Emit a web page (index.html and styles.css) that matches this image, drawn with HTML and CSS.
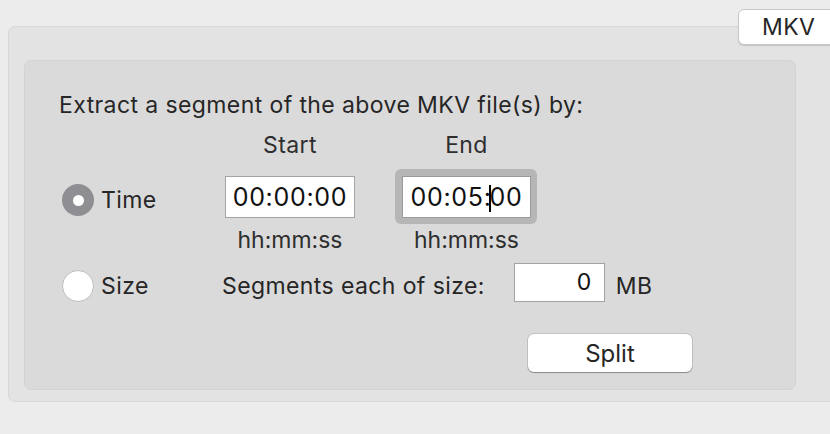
FILE: index.html
```html
<!DOCTYPE html>
<html lang="en">
<head>
    <meta charset="UTF-8">
    <title>MKV Split</title>
    <link rel="stylesheet" href="styles.css">
</head>
<body>
    <div class="tab-button">MKV</div>
    <div class="tabview">
        <div class="panel">
            <p class="intro">Extract a segment of the above MKV file(s) by:</p>

            <div class="time-grid">
                <span></span>
                <span class="col-head">Start</span>
                <span></span>
                <span class="col-head">End</span>

                <label class="choice">
                    <span class="radio checked"></span>
                    <span>Time</span>
                </label>
                <div class="field time">00:00:00</div>
                <span></span>
                <div class="focus-ring">
                    <div class="field time">00:05:<span class="caret"></span>00</div>
                </div>

                <span></span>
                <span class="hint">hh:mm:ss</span>
                <span></span>
                <span class="hint">hh:mm:ss</span>
            </div>

            <div class="size-row">
                <label class="choice">
                    <span class="radio"></span>
                    <span>Size</span>
                </label>
                <span class="size-label">Segments each of size:</span>
                <div class="field number">0</div>
                <span class="unit">MB</span>
            </div>

            <div class="actions">
                <button class="push">Split</button>
            </div>
        </div>
    </div>
</body>
</html>
```

FILE: styles.css
```css
body {
    margin: 0;
    background-color: #ececec;
    font-family: Inter, "Noto Sans", sans-serif;
    font-size: 23px;
    letter-spacing: 0.4px;
    color: #262626;
    overflow: hidden;
}
.tabview {
    margin: 26px -20px 0 8px;
    height: 376px;
    box-sizing: border-box;
    background: #e3e3e3;
    border: 1px solid #d6d6d6;
    border-radius: 7px;
    padding: 33px 0 0 15px;
}
.tab-button {
    position: absolute;
    top: 9px;
    left: 738px;
    width: 110px;
    height: 36px;
    box-sizing: border-box;
    background: #fff;
    border: 1px solid #c9c9c9;
    border-radius: 6px;
    box-shadow: 0 1px 1px rgba(0, 0, 0, 0.15);
    padding-left: 23px;
    line-height: 34px;
}
.panel {
    width: 772px;
    height: 330px;
    box-sizing: border-box;
    background: #dadada;
    border: 1px solid #d3d3d3;
    border-radius: 7px;
    padding: 29px 0 0 34px;
}
.intro {
    margin: 0;
    height: 30px;
    line-height: 30px;
}
.time-grid {
    display: grid;
    grid-template-columns: 166px 130px 47px 129px;
    grid-template-rows: 26px 60px 34px;
    margin-top: 12px;
}
.time-grid > :nth-child(n+5) {
    margin-top: 18px;
}
.time-grid > :nth-child(n+9) {
    margin-top: 10px;
}
.col-head, .hint {
    text-align: center;
    line-height: 26px;
    color: #2e2e2e;
}
.hint {
    line-height: 24px;
    letter-spacing: 0;
}
.choice {
    display: flex;
    align-items: center;
    gap: 7px;
    margin-left: 3px;
}
.time-grid .choice {
    padding-top: 3px;
    height: 42px;
}
.radio {
    width: 32px;
    height: 32px;
    box-sizing: border-box;
    border-radius: 50%;
    background: #fff;
    border: 1px solid #bdbdbd;
    flex: none;
}
.radio.checked {
    background: #8f8f93;
    border: none;
    display: flex;
    align-items: center;
    justify-content: center;
}
.radio.checked::after {
    content: "";
    width: 11px;
    height: 11px;
    border-radius: 50%;
    background: #fff;
}
.field {
    background: #fff;
    border: 1px solid #a3a3a3;
    box-sizing: border-box;
    color: #111;
}
.field.time {
    height: 42px;
    line-height: 40px;
    text-align: center;
    font-size: 25px;
    letter-spacing: 0.7px;
}
.time-grid > .focus-ring {
    margin: 11px -6px -6px -7px;
    padding: 7px 6px 6px 7px;
    background: #b6b6b6;
    border-radius: 6px;
    height: 42px;
}
.focus-ring .field {
    border-color: #9a9a9a;
}
.caret {
    display: inline-block;
    width: 2px;
    height: 27px;
    background: #000;
    vertical-align: -6px;
    margin: 0 -1px 0 -3px;
}
.size-row {
    display: flex;
    align-items: center;
    margin-top: 11px;
    height: 39px;
}
.size-row .choice {
    width: 160px;
    margin-top: 7px;
}
.size-label {
    margin-top: 7px;
}
.field.number {
    width: 91px;
    height: 39px;
    line-height: 37px;
    text-align: right;
    padding-right: 12px;
    margin-left: 29px;
}
.unit {
    margin-left: 11px;
    margin-top: 7px;
}
.actions {
    margin-top: 32px;
    padding-left: 469px;
}
.push {
    width: 164px;
    height: 38px;
    background: #fff;
    border: none;
    border-radius: 6px;
    box-shadow: 0 0 0 1px rgba(0, 0, 0, 0.1), 0 1px 1px rgba(0, 0, 0, 0.3);
    font: inherit;
    font-size: 24px;
    color: #262626;
    padding: 0;
}
```
